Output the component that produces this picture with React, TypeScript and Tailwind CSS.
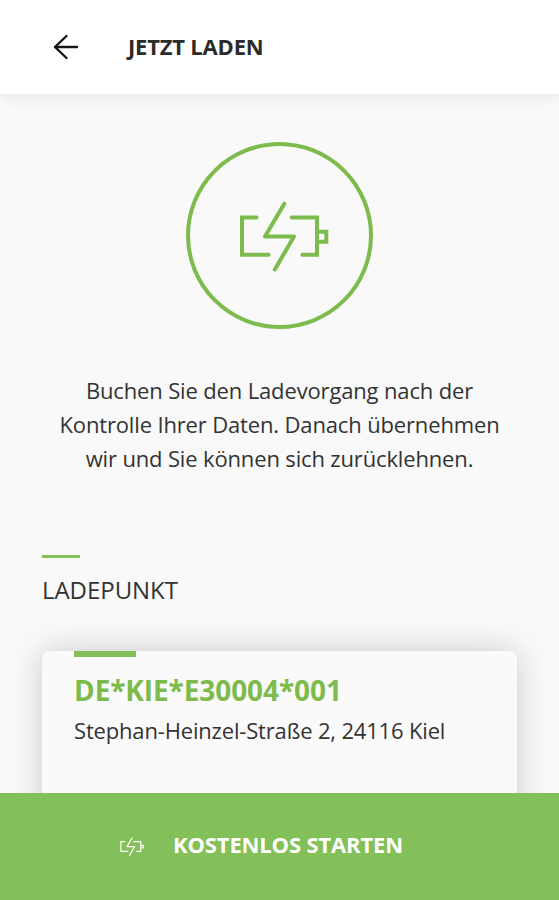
import type React from "react"

function BatteryIcon({ className, strokeWidth = 4 }: { className?: string; strokeWidth?: number }) {
  return (
    <svg
      viewBox="0 0 90 72"
      className={className}
      fill="none"
      stroke="currentColor"
      strokeWidth={strokeWidth}
      strokeLinecap="round"
      aria-hidden="true"
    >
      <path d="M17.5 17.5H3V54.8H29.5" />
      <path d="M52.8 17.5H78V54.8H63.3" />
      <path d="M78 31.8H87.3V41.8H78" />
      <path d="M45.3 3.7L26 36.5H55L35.8 69.5" strokeLinejoin="round" />
    </svg>
  )
}

function BackIcon() {
  return (
    <svg width="26" height="26" viewBox="0 0 26 26" fill="none" stroke="#161616" strokeWidth="2.4" aria-hidden="true">
      <path d="M24 13H2M13.5 2L2 13L13.5 24" strokeLinecap="round" strokeLinejoin="round" />
    </svg>
  )
}

function Header({ title }: { title: string }) {
  return (
    <header className="relative z-10 flex h-[94px] shrink-0 items-center bg-white pb-0.5 pl-[53px] shadow-[0_3px_14px_rgba(0,0,0,0.08)]">
      <button type="button" aria-label="Zurück" className="shrink-0 pt-px">
        <BackIcon />
      </button>
      <h1 className="ml-[49px] text-[22px] leading-[30px] font-bold tracking-[-0.2px] text-[#2b2b2b]">{title}</h1>
    </header>
  )
}

function Card({ children }: { children: React.ReactNode }) {
  return (
    <section className="mx-[42px] mt-[45px] h-[220px] rounded-[7px] bg-[#fafafa] px-8 shadow-[0_0_32px_rgba(0,0,0,0.19)]">
      <div className="h-[6px] w-[62px] bg-[#84c059]" />
      {children}
    </section>
  )
}

export default function App() {
  return (
    <div className="flex h-[900px] w-full flex-col overflow-hidden bg-[#f9f9f9] font-['Open_Sans',sans-serif] text-[#333]">
      <Header title="JETZT LADEN" />

      <main className="min-h-0 flex-1 overflow-hidden">
        <div className="mx-auto mt-12 flex size-[187px] items-center justify-center rounded-full border-4 border-[#7dbb4c] text-[#7dbb4c]">
          <BatteryIcon className="mt-px ml-[8px] h-[72px] w-[90px]" />
        </div>

        <p className="mt-[44px] text-center text-[22px] leading-[34px] tracking-[-0.15px] whitespace-nowrap">
          Buchen Sie den Ladevorgang nach der
          <br />
          Kontrolle Ihrer Daten. Danach übernehmen
          <br />
          wir und Sie können sich zurücklehnen.
        </p>

        <div className="mt-[80px] ml-[42px] h-[3px] w-[38px] bg-[#84c059]" />
        <h2 className="mt-[16px] ml-[42px] text-[24px] leading-[32px] tracking-[-0.05px]">LADEPUNKT</h2>

        <Card>
          <p className="mt-[15px] text-[28px] leading-9 font-bold tracking-[-0.1px] text-[#7dbb4c]">DE*KIE*E30004*001</p>
          <p className="mt-[6px] text-[22px] leading-[32px] tracking-[-0.17px] whitespace-nowrap">
            Stephan-Heinzel-Straße 2, 24116 Kiel
          </p>
        </Card>
      </main>

      <button
        type="button"
        className="relative flex h-[107px] w-full shrink-0 items-center bg-[#84c059] pb-[2px] pl-[120px] text-white"
      >
        <BatteryIcon className="mt-px h-[19px] w-[24px]" strokeWidth={4.5} />
        <span className="-mt-[3px] ml-[29px] text-[22px] leading-[30px] font-bold tracking-[-0.15px]">
          KOSTENLOS STARTEN
        </span>
      </button>
    </div>
  )
}
